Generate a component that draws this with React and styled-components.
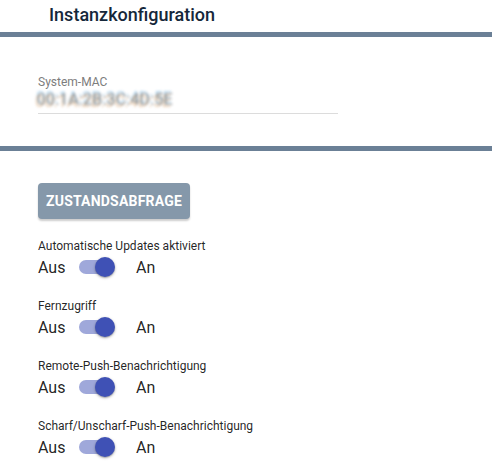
import React from "react";
import styled, { createGlobalStyle } from "styled-components";

const Global = createGlobalStyle`
  html, body { margin: 0; padding: 0; background: #fff; }
  body { font-family: Roboto, "Liberation Sans", sans-serif; width: 492px; overflow: hidden; }
`;

const Page = styled.div`
  display: flex;
  flex-direction: column;
`;

const Header = styled.div`
  height: 32px;
  display: flex;
  align-items: center;
  padding-left: 49px;
`;

const Title = styled.h1`
  margin: 0;
  font-size: 18px;
  font-weight: 500;
  color: #15273a;
  line-height: 1;
  padding-bottom: 2px;
`;

const Divider = styled.div`
  height: 5px;
  background: #6b8096;
`;

const Section = styled.div`
  padding: ${(p) => p.$pad};
  display: flex;
  flex-direction: column;
  align-items: flex-start;
`;

const Field = styled.div`
  width: 300px;
  border-bottom: 1px solid #dcdcdc;
  display: flex;
  flex-direction: column;
`;

const FieldLabel = styled.div`
  font-size: 12px;
  color: #7d7d7d;
  line-height: 14px;
`;

const FieldValue = styled.div`
  font-size: 16px;
  line-height: 22px;
  height: 24px;
  margin-left: -2px;
  color: transparent;
  letter-spacing: 0.2px;
  text-shadow: 1px 0 1.5px rgba(30, 30, 30, 0.7), -1px 2px 1.5px rgba(200, 120, 40, 0.6),
    0 -2px 1.5px rgba(40, 140, 210, 0.6);
  filter: blur(0.8px);
  opacity: 0.6;
`;

const Button = styled.button`
  border: none;
  background: #8598aa;
  color: #fff;
  font-family: Roboto, "Liberation Sans", sans-serif;
  font-weight: 700;
  font-size: 14px;
  letter-spacing: 0.2px;
  height: 36px;
  padding: 0 8px;
  border-radius: 4px;
  box-shadow: 0 2px 2px rgba(0, 0, 0, 0.2);
`;

const ToggleGroup = styled.div`
  display: flex;
  flex-direction: column;
  margin-top: ${(p) => p.$top}px;
`;

const ToggleLabel = styled.div`
  font-size: 12px;
  line-height: 14px;
  color: rgba(0, 0, 0, 0.87);
`;

const ToggleRow = styled.div`
  display: flex;
  align-items: center;
  height: 28px;
  font-size: 16px;
  color: rgba(0, 0, 0, 0.87);
`;

const OptText = styled.span`
  width: ${(p) => p.$w}px;
`;

const SwitchBox = styled.span`
  position: relative;
  width: 36px;
  height: 20px;
  margin: 0 21px 0 14px;
  display: inline-block;
`;

const Track = styled.span`
  position: absolute;
  left: 0;
  top: 3px;
  width: 34px;
  height: 14px;
  border-radius: 7px;
  background: #9fa8da;
`;

const Thumb = styled.span`
  position: absolute;
  left: 16px;
  top: 0;
  width: 20px;
  height: 20px;
  border-radius: 50%;
  background: #3f51b5;
  box-shadow: 0 1px 3px rgba(0, 0, 0, 0.3), 0 1px 1px rgba(0, 0, 0, 0.14);
`;

const toggles = [
  "Automatische Updates aktiviert",
  "Fernzugriff",
  "Remote-Push-Benachrichtigung",
  "Scharf/Unscharf-Push-Benachrichtigung",
];

export default function App() {
  return (
    <Page>
      <Global />
      <Header>
        <Title>Instanzkonfiguration</Title>
      </Header>
      <Divider />
      <Section $pad="38px 0 32px 38px">
        <Field>
          <FieldLabel>System-MAC</FieldLabel>
          <FieldValue>00:1A:2B:3C:4D:5E</FieldValue>
        </Field>
      </Section>
      <Divider />
      <Section $pad="32px 0 0 38px">
        <Button>ZUSTANDSABFRAGE</Button>
        {toggles.map((t, i) => (
          <ToggleGroup key={t} $top={i === 0 ? 20 : 18}>
            <ToggleLabel>{t}</ToggleLabel>
            <ToggleRow>
              <OptText $w={27}>Aus</OptText>
              <SwitchBox>
                <Track />
                <Thumb />
              </SwitchBox>
              <OptText $w={24}>An</OptText>
            </ToggleRow>
          </ToggleGroup>
        ))}
      </Section>
    </Page>
  );
}
